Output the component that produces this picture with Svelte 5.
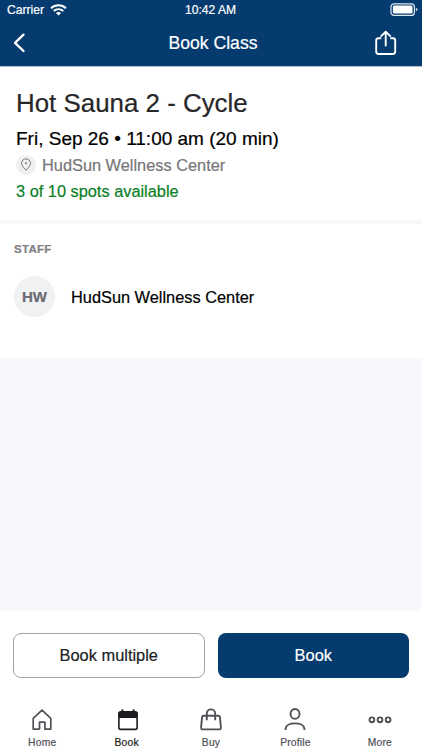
<script>
  const tabs = ['Home', 'Book', 'Buy', 'Profile', 'More'];
  const active = 'Book';
</script>

<div class="screen">
  <header>
    <div class="status">
      <div class="carrier">
        <span>Carrier</span>
        <svg width="17" height="12" viewBox="0 0 17 12" fill="none" stroke="#fff" stroke-width="2">
          <path d="M1 4.3C5.2.3 11.8.3 16 4.3" />
          <path d="M3.7 7.1C6.5 4.6 10.5 4.6 13.3 7.1" />
          <path d="M8.5 11.6 5.9 9Q8.5 7 11.1 9Z" fill="#fff" stroke="none" />
        </svg>
      </div>
      <span class="time">10:42 AM</span>
      <svg class="battery" width="28" height="14" viewBox="0 0 28 14" fill="none">
        <rect x="1" y=".8" width="23.4" height="11.6" rx="3" stroke="#dfe7ef" stroke-width="1.2" />
        <rect x="2.9" y="2.6" width="19.6" height="8" rx="1.4" fill="#fff" />
        <path d="M25.8 4.6Q27.6 5.3 27.6 6.6T25.8 8.6Z" fill="#b4c4d4" />
      </svg>
    </div>
    <div class="nav">
      <svg width="14" height="20" viewBox="0 0 14 20" fill="none" stroke="#fff" stroke-width="2.3" stroke-linecap="round" stroke-linejoin="round">
        <path d="M11.5 1.6 3 9.8 11.5 18" />
      </svg>
      <h1>Book Class</h1>
      <svg width="24" height="26" viewBox="0 0 24 26" fill="none" stroke="#fff" stroke-width="1.9" stroke-linecap="round" stroke-linejoin="round">
        <path d="M6.5 8.2H4.5Q2.2 8.2 2.2 10.5V21.5Q2.2 24 4.7 24H18.7Q21.2 24 21.2 21.5V10.5Q21.2 8.2 18.9 8.2H17" />
        <path d="M11.7 15.5V1.9M7.1 6.1 11.7 1.7 16.3 6.1" />
      </svg>
    </div>
  </header>

  <section class="summary">
    <h2>Hot Sauna 2 - Cycle</h2>
    <p class="when">Fri, Sep 26 • 11:00 am (20 min)</p>
    <p class="place">
      <span class="pin">
        <svg width="12" height="14" viewBox="0 0 12 14" fill="none" stroke="#77777a" stroke-width="1">
          <path d="M6 12.3C4.8 10.8 1.5 8 1.5 5.3A4.5 4.4 0 0 1 10.5 5.3C10.5 8 7.2 10.8 6 12.3Z" />
          <circle cx="6" cy="5.3" r="1" fill="#77777a" stroke="none" />
        </svg>
      </span>
      <span>HudSun Wellness Center</span>
    </p>
    <p class="spots">3 of 10 spots available</p>
  </section>

  <section class="staff">
    <h3>STAFF</h3>
    <div class="person">
      <span class="avatar">HW</span>
      <span>HudSun Wellness Center</span>
    </div>
  </section>

  <div class="spacer"></div>

  <div class="actions">
    <button class="outline">Book multiple</button>
    <button class="primary">Book</button>
  </div>

  <nav class="tabs">
    {#each tabs as tab}
      <div class="tab" class:active={tab === active}>
        <svg width="26" height="26" viewBox="0 0 26 26" fill="none" stroke="currentColor" stroke-width="1.9" stroke-linejoin="round">
          {#if tab === 'Home'}
            <path d="M4.2 11.4 13 3.2 21.8 11.4V22.1H15.9V15.2H10.5V22.1H4.2Z" stroke-width="1.7" />
          {:else if tab === 'Book'}
            <rect x="4.9" y="4.9" width="18.2" height="17.5" rx="1.8" stroke-width="1.6" />
            <path d="M4.5 5H23.5V11H4.5Z" fill="currentColor" stroke="none" />
            <path d="M8.4 2.6V6M19.6 2.6V6" stroke-width="2" />
          {:else if tab === 'Buy'}
            <path d="M5.4 8.8H20.6Q21.7 8.8 21.9 9.9L22.9 20.2Q23.2 22.4 21 22.4H5Q2.8 22.4 3.1 20.2L4.1 9.9Q4.3 8.8 5.4 8.8Z" />
            <path d="M8.8 13.3V6.7C8.8.9 17.2.9 17.2 6.7V13.3" />
          {:else if tab === 'Profile'}
            <ellipse cx="13" cy="6.9" rx="4.5" ry="4.9" />
            <path d="M3.6 23V21.5C4.3 14.7 21.7 14.7 22.4 21.5V23" />
          {:else}
            <circle cx="4.9" cy="12.8" r="2.4" />
            <circle cx="13" cy="12.8" r="2.4" />
            <circle cx="21.1" cy="12.8" r="2.4" />
          {/if}
        </svg>
        <span>{tab}</span>
      </div>
    {/each}
  </nav>
</div>

<style>
  .screen {
    display: flex;
    flex-direction: column;
    width: 422px;
    height: 750px;
    overflow: hidden;
    background: #fff;
    color: #000;
    font-family: 'Liberation Sans', Arial, sans-serif;
    -webkit-text-stroke: 0.2px currentColor;
  }
  h1, h2, h3, p { margin: 0; font-weight: 400; }
  svg { display: block; flex: none; }
  header {
    box-sizing: border-box;
    height: 67px;
    flex: none;
    background: #053b6e;
    border-bottom: 1px solid #b4bdc8;
    color: #fff;
  }
  .status {
    display: grid;
    grid-template-columns: 1fr auto 1fr;
    align-items: center;
    height: 20px;
    padding: 0 4px 0 7px;
    font-size: 12.1px;
    line-height: 19px;
  }
  .time { margin: 0 2px 0 -2px; }
  .carrier { display: flex; align-items: center; gap: 6px; }
  .battery { justify-self: end; }
  .nav {
    display: grid;
    grid-template-columns: 1fr auto 1fr;
    align-items: center;
    height: 46px;
    padding: 0 24px 0 12px;
  }
  .nav svg:last-child { justify-self: end; }
  h1 { font-size: 17.6px; line-height: 46px; margin: 0 -7px 0 9px; }
  .summary {
    box-sizing: border-box;
    height: 153px;
    flex: none;
    padding: 20px 16px 0;
  }
  h2 { font-size: 25.9px; line-height: 32px; color: #27272a; }
  .when { font-size: 19px; line-height: 26px; margin-top: 7px; }
  .place {
    display: flex;
    align-items: center;
    gap: 6px;
    height: 26px;
    font-size: 16.35px;
    color: #77777a;
  }
  .pin {
    display: flex;
    align-items: center;
    justify-content: center;
    width: 20px;
    height: 20px;
    border-radius: 50%;
    background: #f0f0f1;
  }
  .spots { font-size: 16.35px; line-height: 26px; color: #087f24; }
  .staff {
    box-sizing: border-box;
    height: 138px;
    flex: none;
    border-top: 4px solid #f7f8fb;
    padding: 18px 14px 0;
  }
  h3 {
    font-size: 11.5px;
    font-weight: 700;
    line-height: 14px;
    letter-spacing: 0.3px;
    color: #808084;
  }
  .person {
    display: flex;
    align-items: center;
    gap: 16px;
    margin-top: 20px;
    font-size: 16.35px;
  }
  .person span:last-child { padding-top: 1px; }
  .avatar {
    width: 41px;
    height: 41px;
    border-radius: 50%;
    background: #f0f1f3;
    color: #6a6a72;
    font-size: 15px;
    font-weight: 700;
    line-height: 41px;
    text-align: center;
  }
  .spacer { flex: 1; background: #f7f8fb; }
  .actions {
    box-sizing: border-box;
    display: flex;
    gap: 13px;
    flex: none;
    padding: 22px 13px 0;
    height: 67px;
  }
  button {
    box-sizing: border-box;
    flex: 1 1 50%;
    height: 45px;
    padding: 0;
    border-radius: 8px;
    font: 16.4px 'Liberation Sans', Arial, sans-serif;
  }
  .outline { border: 1px solid #a2a2a4; background: #fff; color: #202022; }
  .primary { border: 0; background: #053b6e; color: #fff; }
  .tabs { display: flex; height: 72px; flex: none; }
  .tab {
    display: flex;
    flex: 1;
    flex-direction: column;
    align-items: center;
    padding-top: 29px;
    color: #505058;
    font-size: 10.3px;
    line-height: 14px;
    letter-spacing: 0.2px;
  }
  .tab span { margin-top: 3px; }
  .active { color: #1c1c20; }
</style>
